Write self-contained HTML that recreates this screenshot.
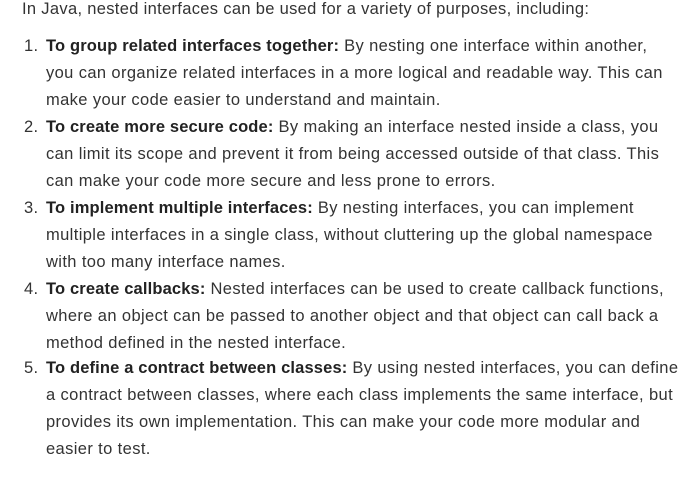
<!DOCTYPE html>
<html><head><meta charset="utf-8"><style>
body{margin:0;background:#fff;width:684px;height:484px;overflow:hidden;font-family:"Liberation Sans",sans-serif;font-size:16.5px;letter-spacing:0.38px;color:#333;}
.l{position:absolute;white-space:nowrap;line-height:27px;height:27px;left:46px;}
.n{position:absolute;white-space:nowrap;line-height:27px;left:24px;}
b{color:#222;letter-spacing:0.15px;}
</style></head><body>
<div class="l" style="left:22px;top:-4px;letter-spacing:0.32px">In Java, nested interfaces can be used for a variety of purposes, including:</div>
<div class="n" style="top:33px">1.</div><div class="l" style="top:33px"><b>To group related interfaces together:</b> By nesting one interface within another,</div>
<div class="l" style="top:60px">you can organize related interfaces in a more logical and readable way. This can</div>
<div class="l" style="top:87px">make your code easier to understand and maintain.</div>
<div class="n" style="top:114px">2.</div><div class="l" style="top:114px"><b>To create more secure code:</b> By making an interface nested inside a class, you</div>
<div class="l" style="top:141px">can limit its scope and prevent it from being accessed outside of that class. This</div>
<div class="l" style="top:168px">can make your code more secure and less prone to errors.</div>
<div class="n" style="top:195px">3.</div><div class="l" style="top:195px"><b>To implement multiple interfaces:</b> By nesting interfaces, you can implement</div>
<div class="l" style="top:222px">multiple interfaces in a single class, without cluttering up the global namespace</div>
<div class="l" style="top:249px">with too many interface names.</div>
<div class="n" style="top:276px">4.</div><div class="l" style="top:276px"><b>To create callbacks:</b> Nested interfaces can be used to create callback functions,</div>
<div class="l" style="top:303px">where an object can be passed to another object and that object can call back a</div>
<div class="l" style="top:330px">method defined in the nested interface.</div>
<div class="n" style="top:355px">5.</div><div class="l" style="top:355px"><b>To define a contract between classes:</b> By using nested interfaces, you can define</div>
<div class="l" style="top:382px">a contract between classes, where each class implements the same interface, but</div>
<div class="l" style="top:409px">provides its own implementation. This can make your code more modular and</div>
<div class="l" style="top:436px">easier to test.</div>
</body></html>
